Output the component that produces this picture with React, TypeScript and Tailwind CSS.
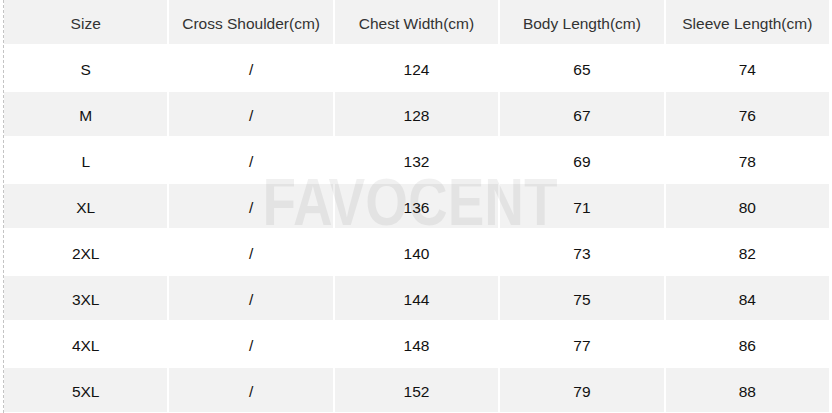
const headers = ["Size", "Cross Shoulder(cm)", "Chest Width(cm)", "Body Length(cm)", "Sleeve Length(cm)"];

const rows = [
  ["S", "/", "124", "65", "74"],
  ["M", "/", "128", "67", "76"],
  ["L", "/", "132", "69", "78"],
  ["XL", "/", "136", "71", "80"],
  ["2XL", "/", "140", "73", "82"],
  ["3XL", "/", "144", "75", "84"],
  ["4XL", "/", "148", "77", "86"],
  ["5XL", "/", "152", "79", "88"],
];

export default function App() {
  return (
    <div className="relative h-[413px] w-[832px] overflow-hidden bg-white pl-[3px] font-['Liberation_Sans',Arial,sans-serif]">
      <div className="h-full w-[826px] border-l border-dashed border-[#c4c4c4]">
        <div className="mb-[2px] grid h-[44px] grid-cols-5 gap-x-[2px]">
          {headers.map((h) => (
            <div key={h} className="flex items-center justify-center bg-[#f2f2f2] pt-[3px] text-[15.5px] text-[#333]">{h}</div>
          ))}
        </div>
        {rows.map((row, i) => (
          <div key={row[0]} className="mb-[2px] grid h-[44px] grid-cols-5 gap-x-[2px]">
            {row.map((cell, j) => (
              <div key={j} className={`flex items-center justify-center pt-[3px] text-[15.5px] text-[#111] ${i % 2 === 1 ? "bg-[#f2f2f2]" : "bg-white"}`}>{cell}</div>
            ))}
          </div>
        ))}
      </div>
      <div className="pointer-events-none absolute left-[410px] top-[201px] -translate-x-1/2 -translate-y-1/2 scale-x-[0.82] text-[67px] font-bold leading-none text-black/[0.06]">
        FAVOCENT
      </div>
    </div>
  );
}
